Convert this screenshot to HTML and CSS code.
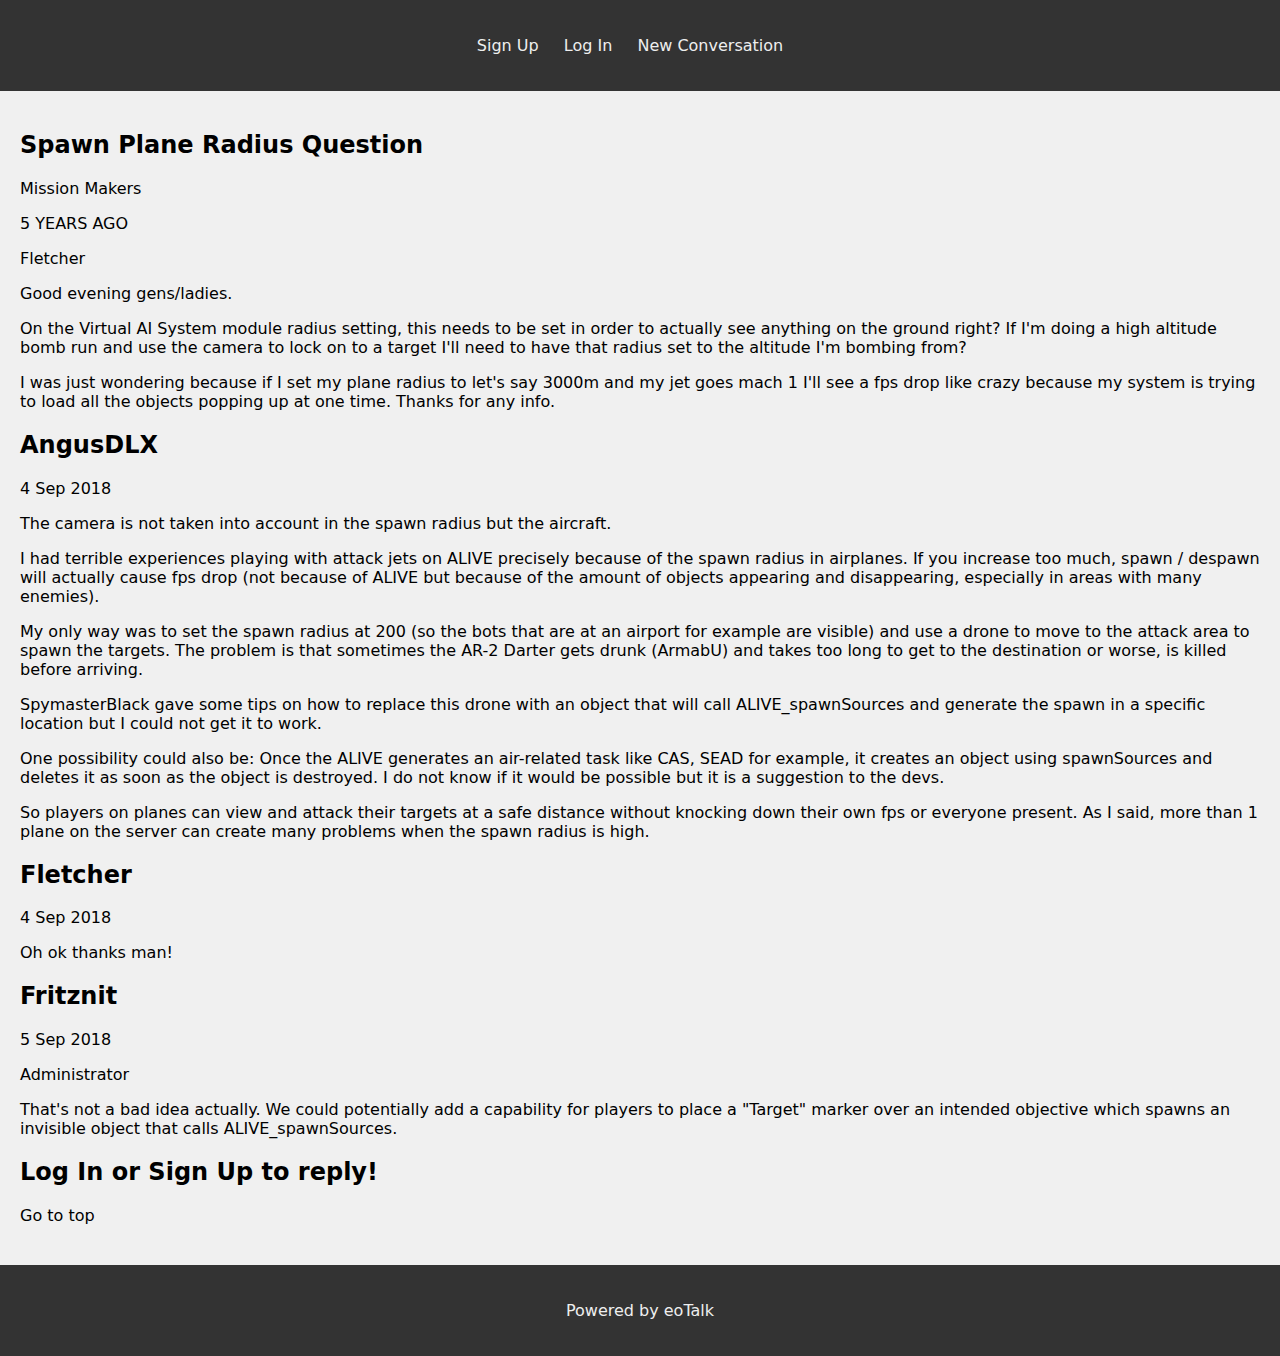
FILE: index.html
```html
<!DOCTYPE html>
<html lang="en">
<head>
<meta charset="utf-8">
<title>Spawn Plane Radius Question</title>
<link rel="stylesheet" href="styles.css">
</head>
<body>
<header class="site-header">
  <nav class="nav">
    <a href="#">Sign Up</a>
    <a href="#">Log In</a>
    <a href="#">New Conversation</a>
  </nav>
</header>
<main class="content">
  <h2>Spawn Plane Radius Question</h2>
  <p>Mission Makers</p>
  <p>5 YEARS AGO</p>
  <p>Fletcher</p>
  <p>Good evening gens/ladies.</p>
  <p>On the Virtual AI System module radius setting, this needs to be set in order to actually see anything on the ground right? If I'm doing a high altitude bomb run and use the camera to lock on to a target I'll need to have that radius set to the altitude I'm bombing from?</p>
  <p>I was just wondering because if I set my plane radius to let's say 3000m and my jet goes mach 1 I'll see a fps drop like crazy because my system is trying to load all the objects popping up at one time. Thanks for any info.</p>

  <h2>AngusDLX</h2>
  <p>4 Sep 2018</p>
  <p>The camera is not taken into account in the spawn radius but the aircraft.</p>
  <p>I had terrible experiences playing with attack jets on ALIVE precisely because of the spawn radius in airplanes. If you increase too much, spawn / despawn will actually cause fps drop (not because of ALIVE but because of the amount of objects appearing and disappearing, especially in areas with many enemies).</p>
  <p>My only way was to set the spawn radius at 200 (so the bots that are at an airport for example are visible) and use a drone to move to the attack area to spawn the targets. The problem is that sometimes the AR-2 Darter gets drunk (ArmabU) and takes too long to get to the destination or worse, is killed before arriving.</p>
  <p>SpymasterBlack gave some tips on how to replace this drone with an object that will call ALIVE_spawnSources and generate the spawn in a specific location but I could not get it to work.</p>
  <p>One possibility could also be: Once the ALIVE generates an air-related task like CAS, SEAD for example, it creates an object using spawnSources and deletes it as soon as the object is destroyed. I do not know if it would be possible but it is a suggestion to the devs.</p>
  <p>So players on planes can view and attack their targets at a safe distance without knocking down their own fps or everyone present. As I said, more than 1 plane on the server can create many problems when the spawn radius is high.</p>

  <h2>Fletcher</h2>
  <p>4 Sep 2018</p>
  <p>Oh ok thanks man!</p>

  <h2>Fritznit</h2>
  <p>5 Sep 2018</p>
  <p>Administrator</p>
  <p>That's not a bad idea actually. We could potentially add a capability for players to place a "Target" marker over an intended objective which spawns an invisible object that calls ALIVE_spawnSources.</p>

  <h2>Log In or Sign Up to reply!</h2>
  <p>Go to top</p>
</main>
<footer class="site-footer">
  <p>Powered by eoTalk</p>
</footer>
</body>
</html>
```

FILE: styles.css
```css
html, body {
  margin: 0;
  padding: 0;
}
body {
  font-family: "DejaVu Sans", sans-serif;
  font-size: 16px;
  color: #000;
  background: #f0f0f0;
}
.site-header {
  background: #333;
  padding: 36px 0;
}
.nav {
  text-align: center;
  line-height: 19px;
}
.nav a {
  color: #eeeeee;
  text-decoration: none;
  margin-right: 20px;
}
.content {
  padding: 20px 20px 24px;
  background: #f0f0f0;
}
.content h2 {
  font-size: 24px;
  font-weight: bold;
  margin: 0.83em 0;
}
.content p {
  margin: 16px 0;
}
.site-footer {
  background: #333;
  color: #eeeeee;
  text-align: center;
  padding: 36px 0;
}
.site-footer p {
  margin: 0;
  line-height: 19px;
}
```
